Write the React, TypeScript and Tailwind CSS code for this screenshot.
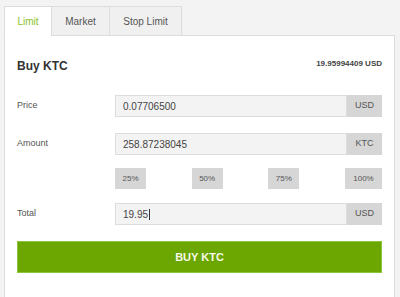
import React from "react";

const rows = [
  { label: "Price", value: "0.07706500", unit: "USD" },
  { label: "Amount", value: "258.87238045", unit: "KTC" },
];

function Field({ label, value, unit, caret }: { label: string; value: string; unit: string; caret?: boolean }) {
  return (
    <div className="flex items-center h-[22px]">
      <div className="w-[98px] text-[9px] text-[#555]">{label}</div>
      <div className="flex-1 h-full flex items-center bg-[#f3f3f3] border border-[#dcdcdc] pl-[7px] text-[10px] text-[#444]">
        {value}
        {caret && <span className="inline-block w-px h-[11px] bg-[#333] ml-[1px]" />}
      </div>
      <div className="w-[35px] h-full flex items-center justify-center bg-[#d6d6d6] text-[9px] text-[#555]">{unit}</div>
    </div>
  );
}

export default function App() {
  const tabs = [
    { name: "Limit", w: "w-[48px]", active: true },
    { name: "Market", w: "w-[59px]", active: false },
    { name: "Stop Limit", w: "w-[73px]", active: false },
  ];

  return (
    <div className="w-[400px] h-[297px] overflow-hidden bg-[#f3f3f3] pt-[6px] pl-[4px]" style={{ fontFamily: '"Liberation Sans", Arial, sans-serif' }}>
      <div className="relative z-10 flex -mb-px">
        {tabs.map((t) => (
          <div
            key={t.name}
            className={`${t.w} h-[30px] flex items-center justify-center text-[10px] border border-[#dcdcdc] -ml-px first:ml-0 ${
              t.active ? "bg-white border-b-white text-[#8cbf26]" : "bg-[#f0f0f0] text-[#555]"
            }`}
          >
            {t.name}
          </div>
        ))}
      </div>
      <div className="w-[391px] h-[280px] bg-white border border-[#dcdcdc] px-[12px]">
        <div className="flex items-center justify-between pt-[23px] h-[37px]">
          <span className="text-[12px] font-bold text-[#333]">Buy KTC</span>
          <span className="text-[8px] font-bold text-[#444] -mt-[5px]">19.95994409 USD</span>
        </div>
        <div className="mt-[22px] flex flex-col">
          <Field {...rows[0]} />
          <div className="mt-[16px]">
            <Field {...rows[1]} />
          </div>
          <div className="mt-[13px] ml-[98px] flex justify-between">
            {["25%", "50%", "75%", "100%"].map((p) => (
              <div
                key={p}
                className={`${p === "100%" ? "w-[37px]" : "w-[31px]"} h-[21px] flex items-center justify-center bg-[#d6d6d6] text-[8px] text-[#555]`}
              >
                {p}
              </div>
            ))}
          </div>
          <div className="mt-[14px]">
            <Field label="Total" value="19.95" unit="USD" caret />
          </div>
          <button className="mt-[16px] h-[32px] w-full bg-[#6ca600] text-[#f4f9e8] text-[11px] font-bold border border-[#8cc43a]">
            BUY KTC
          </button>
        </div>
      </div>
    </div>
  );
}
